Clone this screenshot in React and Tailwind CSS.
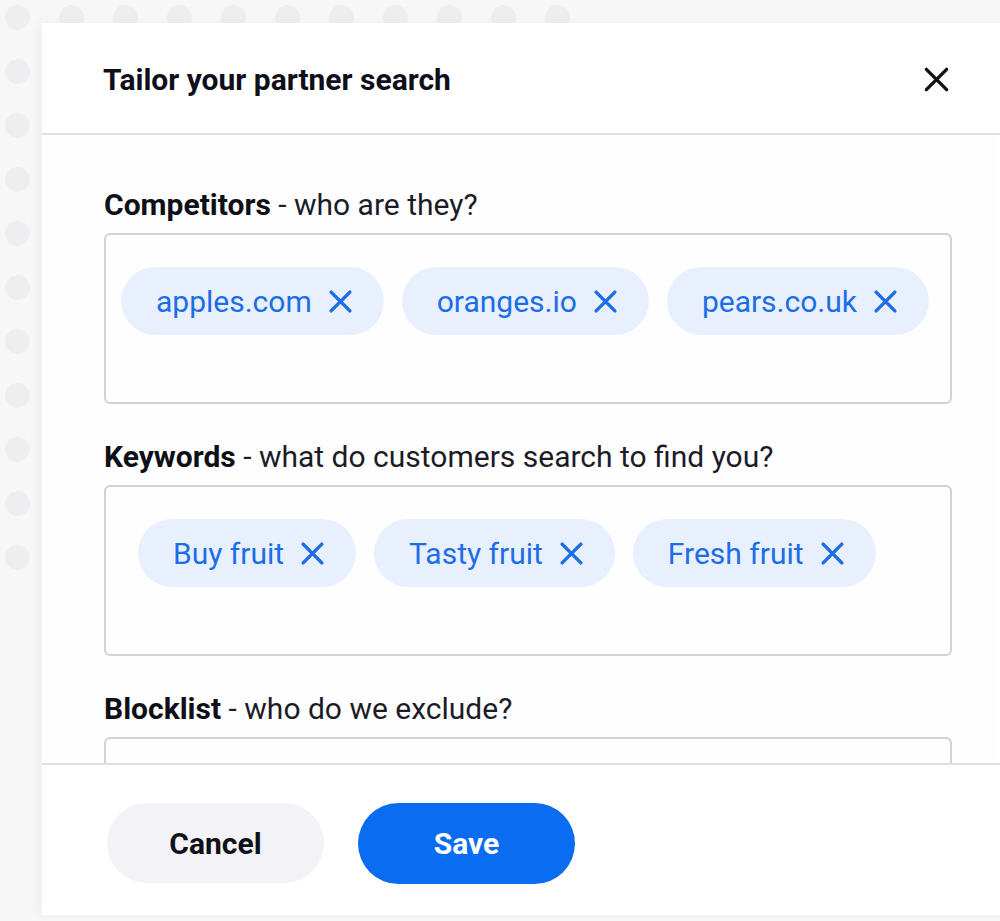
import React from "react";

const XIcon = ({ className, strokeWidth = 3 }) => (
  <svg viewBox="0 0 24 24" className={className} fill="none" stroke="currentColor" strokeWidth={strokeWidth} strokeLinecap="round">
    <path d="M3 3L21 21M21 3L3 21" />
  </svg>
);

const Chip = ({ label }) => (
  <div className="flex items-center h-[68px] rounded-full bg-[#e9f0fd] pl-[35px] pr-[31px] text-[#1c6de6] text-[30px]">
    <span>{label}</span>
    <XIcon className="w-[25px] h-[25px] ml-[16px]" strokeWidth={3.3} />
  </div>
);

const Field = ({ bold, rest, chips, padLeft }) => (
  <div className="flex flex-col">
    <div className="text-[30px] leading-[34px] text-[#1c1c27]">
      <span className="font-bold text-[#0f0f18]">{bold}</span> - {rest}
    </div>
    <div className={`mt-[11px] h-[171px] border-2 border-[#d2d2d6] rounded-[6px] pt-[32px] ${padLeft} flex gap-[18px] items-start`}>
      {chips.map((c) => (
        <Chip key={c} label={c} />
      ))}
    </div>
  </div>
);

export default function App() {
  const dots = [];
  for (let r = 0; r < 11; r++) {
    for (let c = 0; c < 11; c++) {
      dots.push(<div key={`${r}-${c}`} className="w-[25px] h-[25px] rounded-full bg-[#eeeef0]" />);
    }
  }
  return (
    <div className="relative w-[1000px] h-[921px] bg-[#f7f7f8] overflow-hidden" style={{ fontFamily: "Roboto, 'Noto Sans', sans-serif" }}>
      <div className="grid grid-cols-[repeat(11,25px)] gap-[29px] p-[5px]">{dots}</div>

      <div className="absolute left-[42px] top-[23px] w-[1000px] h-[892px] bg-white flex flex-col shadow-[-4px_0_10px_rgba(0,0,0,0.04)]">
        <div className="h-[112px] shrink-0 border-b-2 border-[#e1e1e5] flex items-center justify-between pl-[61px] pr-[92px]">
          <h1 className="text-[30px] font-bold text-[#0f0f1c] mt-[2px]">Tailor your partner search</h1>
          <XIcon className="w-[27px] h-[27px] text-[#111118] mt-[2px]" strokeWidth={3} />
        </div>

        <div className="flex-1 overflow-hidden pl-[62px] pr-[45px] w-[955px] bg-[#fefeff]">
          <div className="flex flex-col gap-[36px] pt-[53px]">
            <Field bold="Competitors" rest="who are they?" chips={["apples.com", "oranges.io", "pears.co.uk"]} padLeft="pl-[15px]" />
            <Field bold="Keywords" rest="what do customers search to find you?" chips={["Buy fruit", "Tasty fruit", "Fresh fruit"]} padLeft="pl-[32px]" />
            <Field bold="Blocklist" rest="who do we exclude?" chips={[]} padLeft="pl-[32px]" />
          </div>
        </div>

        <div className="h-[152px] shrink-0 border-t-2 border-[#e1e1e5] flex items-center gap-[34px] pl-[65px] pt-[6px]">
          <button className="w-[217px] h-[80px] rounded-full bg-[#f3f3f7] text-[30px] font-bold text-[#111118]">Cancel</button>
          <button className="w-[217px] h-[81px] rounded-full bg-[#0a6cf0] text-[30px] font-bold text-white">Save</button>
        </div>
      </div>
    </div>
  );
}
